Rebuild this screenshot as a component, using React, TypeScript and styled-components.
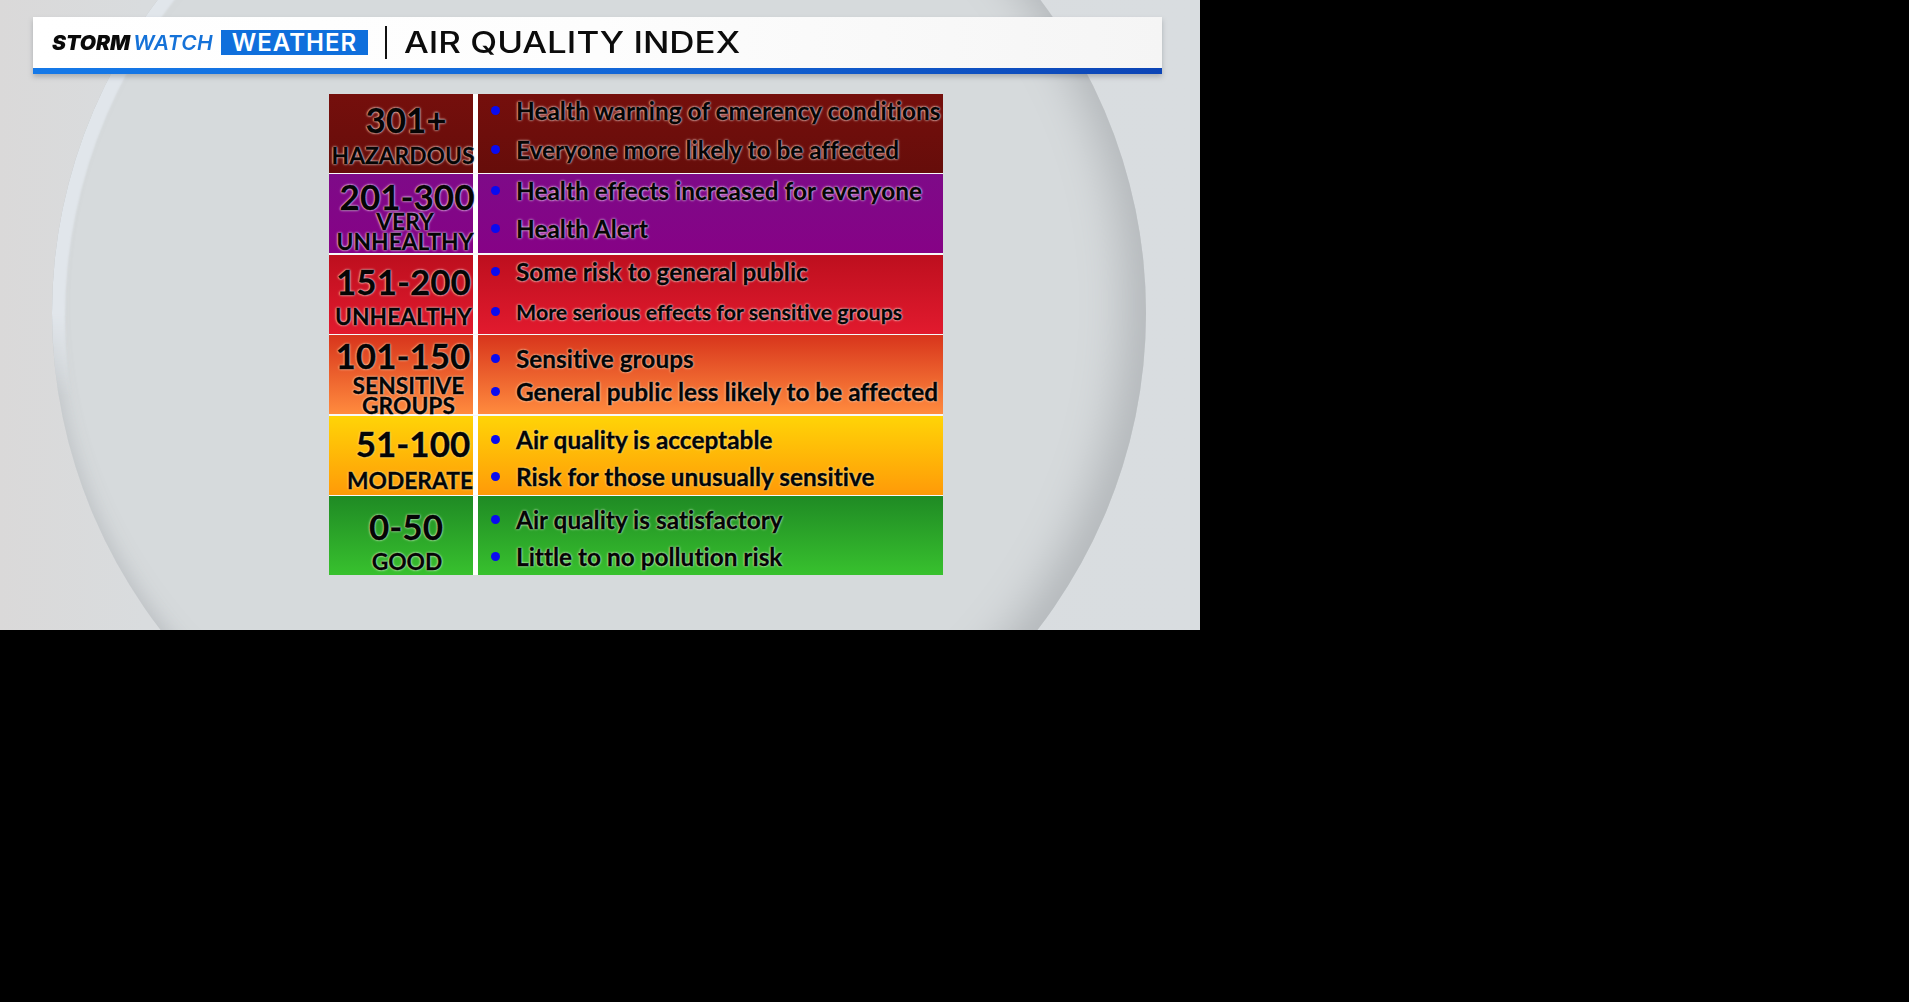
import React from "react";
import styled, { createGlobalStyle } from "styled-components";

type Band = {
  range: string;
  label: string[];
  notes: string[];
  noteSizes?: number[];
  gradient: string;
  halo: string;
  rangeTop: number;
  valueShift: number;
  labelShift: number;
  labelGap: number;
  noteTop: number;
  noteGap: number;
};

const bands: Band[] = [
  {
    range: "301+",
    label: ["HAZARDOUS"],
    notes: ["Health warning of emerency conditions", "Everyone more likely to be affected"],
    gradient: "linear-gradient(#750f0c, #660d0a)",
    halo: "rgba(250, 205, 200, 0.95)",
    rangeTop: 10,
    valueShift: 10,
    labelShift: 4,
    labelGap: 11,
    noteTop: 4,
    noteGap: 15,
  },
  {
    range: "201-300",
    label: ["VERY", "UNHEALTHY"],
    notes: ["Health effects increased for everyone", "Health Alert"],
    gradient: "linear-gradient(#7e0a88, #860286)",
    halo: "rgba(245, 205, 250, 0.95)",
    rangeTop: 7,
    valueShift: 12,
    labelShift: 8,
    labelGap: 0,
    noteTop: 4,
    noteGap: 14,
  },
  {
    range: "151-200",
    label: ["UNHEALTHY"],
    notes: ["Some risk to general public", "More serious effects for sensitive groups"],
    noteSizes: [24.4, 21.4],
    gradient: "linear-gradient(#bd0f1e, #e21a2e)",
    halo: "rgba(255, 205, 205, 0.95)",
    rangeTop: 11,
    valueShift: 5,
    labelShift: 5,
    labelGap: 10,
    noteTop: 5,
    noteGap: 16,
  },
  {
    range: "101-150",
    label: ["SENSITIVE", "GROUPS"],
    notes: ["Sensitive groups", "General public less likely to be affected"],
    gradient: "linear-gradient(#d8351c, #ff8b3e)",
    halo: "rgba(255, 215, 185, 0.8)",
    rangeTop: 5,
    valueShift: 4,
    labelShift: 15,
    labelGap: 5,
    noteTop: 11,
    noteGap: 9,
  },
  {
    range: "51-100",
    label: ["MODERATE"],
    notes: ["Air quality is acceptable", "Risk for those unusually sensitive"],
    gradient: "linear-gradient(#ffd407, #ff9a08)",
    halo: "rgba(255, 240, 170, 0.6)",
    rangeTop: 12,
    valueShift: 24,
    labelShift: 18,
    labelGap: 12,
    noteTop: 12,
    noteGap: 13,
  },
  {
    range: "0-50",
    label: ["GOOD"],
    notes: ["Air quality is satisfactory", "Little to no pollution risk"],
    gradient: "linear-gradient(#1f8a24, #38c12e)",
    halo: "rgba(205, 245, 195, 0.85)",
    rangeTop: 15,
    valueShift: 10,
    labelShift: 12,
    labelGap: 10,
    noteTop: 12,
    noteGap: 13,
  },
];

const App = () => {
  return (
    <>
      <GlobalStyle />
      <Stage>
        <Banner>
          <BannerMain>
            <LogoSlot>
              <Logo>
                STORM<LogoAccent>WATCH</LogoAccent>
              </Logo>
            </LogoSlot>
            <LogoTag>WEATHER</LogoTag>
            <Divider />
            <Title>AIR QUALITY INDEX</Title>
          </BannerMain>
          <BannerRule />
        </Banner>
        <Chart>
          {bands.map((band) => (
            <Row key={band.range} $gradient={band.gradient} $halo={band.halo}>
              <RangeCell $top={band.rangeTop}>
                <RangeValue $shift={band.valueShift}>{band.range}</RangeValue>
                <RangeLabel $gap={band.labelGap} $shift={band.labelShift}>
                  {band.label.map((line) => (
                    <span key={line}>{line}</span>
                  ))}
                </RangeLabel>
              </RangeCell>
              <Notes $top={band.noteTop} $gap={band.noteGap}>
                {band.notes.map((note, i) => (
                  <Note key={note} $size={band.noteSizes?.[i] ?? 24.4}>
                    {note}
                  </Note>
                ))}
              </Notes>
            </Row>
          ))}
        </Chart>
      </Stage>
    </>
  );
};

const GlobalStyle = createGlobalStyle`
  html, body {
    margin: 0;
    min-height: 100%;
    background: #000;
    font-family: "Lato", "Liberation Sans", sans-serif;
  }
`;

const Stage = styled.main`
  position: relative;
  width: 1200px;
  height: 630px;
  box-sizing: border-box;
  padding: 17px 38px 0 33px;
  overflow: hidden;
  background: linear-gradient(90deg, #dad9d9 0%, #d9dcde 12%, #d9dde0 100%);

  &::before,
  &::after {
    content: "";
    position: absolute;
    left: 52px;
    top: -217px;
    width: 1094px;
    height: 1060px;
    border-radius: 50%;
  }

  &::before {
    background: #d6dadc;
    box-shadow:
      inset -24px -8px 40px #b7bbbe,
      inset 0 -8px 18px #c2c6c9;
  }

  &::after {
    box-shadow: inset 13px 5px 2px #e1e6eb;
    mask-image: linear-gradient(#000 50%, transparent 58%);
  }
`;

const Banner = styled.header`
  position: relative;
  z-index: 1;
  display: flex;
  flex-direction: column;
  height: 57px;
  box-shadow: 0 3px 5px rgba(90, 95, 100, 0.35);
`;

const BannerMain = styled.div`
  display: flex;
  align-items: center;
  height: 51px;
  padding-left: 19px;
  background: linear-gradient(90deg, #fff 0%, #fdfdfd 50%, #f5f5f5 100%);
`;

const BannerRule = styled.div`
  height: 6px;
  background: linear-gradient(90deg, #1579e8 0%, #1265d6 55%, #0c45b6 100%);
`;

const LogoSlot = styled.div`
  width: 169px;
`;

const Logo = styled.div`
  font-family: "Inter", "Liberation Sans", sans-serif;
  font-size: 20px;
  font-style: italic;
  font-weight: 900;
  color: #0a0a0a;
  white-space: nowrap;
  transform: scaleX(1.05);
  transform-origin: left center;
`;

const LogoAccent = styled.span`
  margin-left: 3px;
  font-weight: 600;
  letter-spacing: 0.4px;
  color: #1572d8;
`;

const LogoTag = styled.div`
  display: flex;
  align-items: center;
  justify-content: center;
  width: 147px;
  height: 25px;
  background: #0f6fdc;
  font-family: "Inter", "Liberation Sans", sans-serif;
  font-size: 24px;
  font-weight: 600;
  letter-spacing: 1px;
  color: #fff;
`;

const Divider = styled.div`
  width: 2px;
  height: 33px;
  margin: 0 17px;
  background: #111;
`;

const Title = styled.h1`
  margin: 0;
  padding-bottom: 2px;
  font-family: "Inter", "Liberation Sans", sans-serif;
  font-size: 30px;
  font-weight: 500;
  color: #0c0c0c;
  white-space: nowrap;
  transform: scaleX(1.165);
  transform-origin: left center;
`;

const Chart = styled.section`
  position: relative;
  z-index: 1;
  display: grid;
  grid-auto-rows: 79px;
  row-gap: 1.4px;
  width: 614px;
  margin: 20px 0 0 296px;
  background: rgba(255, 255, 255, 0.8);
`;

const Row = styled.div<{ $gradient: string; $halo: string }>`
  display: grid;
  grid-template-columns: 149px 1fr;
  background: ${(p) => p.$gradient};
  color: #050505;
  font-weight: 700;
  font-variant-ligatures: none;
  -webkit-text-stroke: 0.35px #050505;
  text-shadow:
    0 0 1px ${(p) => p.$halo},
    0 0 1px ${(p) => p.$halo},
    0 0 2px ${(p) => p.$halo},
    0 0 3px ${(p) => p.$halo};
`;

const RangeCell = styled.div<{ $top: number }>`
  display: flex;
  flex-direction: column;
  align-items: center;
  box-sizing: border-box;
  padding-top: ${(p) => p.$top}px;
  border-right: 5px solid #fff;
  white-space: nowrap;
`;

const RangeValue = styled.div<{ $shift: number }>`
  margin-left: ${(p) => p.$shift}px;
  font-size: 35px;
  line-height: 30px;
`;

const RangeLabel = styled.div<{ $gap: number; $shift: number }>`
  display: flex;
  flex-direction: column;
  align-items: center;
  margin-top: ${(p) => p.$gap}px;
  margin-left: ${(p) => p.$shift}px;
  font-size: 22.8px;
  line-height: 20px;
`;

const Notes = styled.ul<{ $top: number; $gap: number }>`
  display: flex;
  flex-direction: column;
  gap: ${(p) => p.$gap}px;
  margin: 0;
  padding: ${(p) => p.$top}px 0 0 13px;
  list-style: none;
`;

const Note = styled.li<{ $size: number }>`
  display: flex;
  align-items: center;
  gap: 16px;
  height: 24px;
  font-size: ${(p) => p.$size}px;
  white-space: nowrap;

  &::before {
    content: "";
    flex: none;
    width: 9px;
    height: 9px;
    border-radius: 50%;
    background: #0a0af0;
  }
`;

export default App;
